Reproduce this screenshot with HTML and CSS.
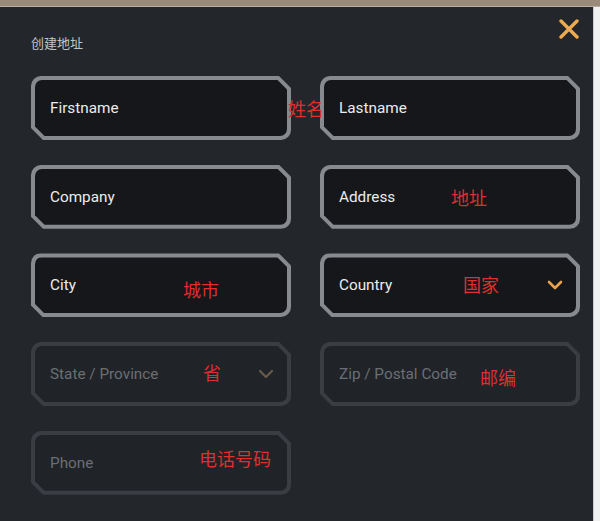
FILE: index.html
```html
<!DOCTYPE html>
<html lang="zh">
<head>
<meta charset="utf-8">
<title>创建地址</title>
<link rel="stylesheet" href="styles.css">
</head>
<body>
<div class="topbar"></div>
<div class="main">
  <div class="panel">
    <div class="header">
      <div class="title">创建地址</div>
      <svg class="close" width="20" height="20" viewBox="0 0 20 20">
        <path d="M2 2 L18 18 M18 2 L2 18" stroke="#eeaa4e" stroke-width="3.4" stroke-linecap="round" fill="none"/>
      </svg>
    </div>
    <div class="grid">
      <div class="field"><div class="inner">Firstname</div></div>
      <div class="field"><div class="inner">Lastname</div></div>
      <div class="field"><div class="inner">Company</div></div>
      <div class="field"><div class="inner">Address</div></div>
      <div class="field"><div class="inner">City</div></div>
      <div class="field"><div class="inner">Country
        <svg class="chev" width="16" height="10" viewBox="0 0 16 10"><path d="M2 2 L8 8 L14 2" stroke="#eba04a" stroke-width="2.6" fill="none" stroke-linecap="round" stroke-linejoin="round"/></svg>
      </div></div>
      <div class="field disabled"><div class="inner">State / Province
        <svg class="chev" width="16" height="10" viewBox="0 0 16 10"><path d="M2 2 L8 8 L14 2" stroke="#6a5a4c" stroke-width="2.2" fill="none" stroke-linecap="round" stroke-linejoin="round"/></svg>
      </div></div>
      <div class="field disabled"><div class="inner">Zip / Postal Code</div></div>
      <div class="field disabled"><div class="inner">Phone</div></div>
    </div>
    <span class="note n1">姓名</span>
    <span class="note n2">地址</span>
    <span class="note n3">城市</span>
    <span class="note n4">国家</span>
    <span class="note n5">省</span>
    <span class="note n6">邮编</span>
    <span class="note n7">电话号码</span>
  </div>
  <div class="scrollbar"></div>
</div>
</body>
</html>
```
FILE: styles.css
```css
* { box-sizing: border-box; }
html, body { margin: 0; padding: 0; }
body {
  width: 600px;
  height: 521px;
  overflow: hidden;
  background: #23272c;
  font-family: Roboto, "Noto Sans CJK SC", sans-serif;
}
.topbar {
  height: 7px;
  background: #9a8a7a;
  border-bottom: 1px solid #b8aea4;
}
.main {
  display: flex;
  height: 514px;
}
.panel {
  position: relative;
  width: 593px;
  background: #23272c;
}
.scrollbar {
  width: 7px;
  background: #f0f0f0;
  border-left: 1px solid #c9c9c9;
}
.header {
  height: 69px;
  display: flex;
  justify-content: space-between;
  align-items: flex-start;
  padding: 12px 14px 0 31px;
}
.title {
  margin-top: 16px;
  font-family: "Noto Sans CJK SC", sans-serif;
  font-size: 13px;
  line-height: 16px;
  color: #c2c6ca;
}
.grid {
  display: grid;
  grid-template-columns: 260px 260px;
  column-gap: 29px;
  row-gap: 24.7px;
  padding-left: 31px;
}
.field {
  height: 64px;
  padding: 4px;
  background: #878b8f;
  border-radius: 10px 2px 10px 2px;
  clip-path: polygon(0 0, calc(100% - 12px) 0, 100% 12px, 100% 100%, 12px 100%, 0 calc(100% - 12px));
}
.inner {
  height: 100%;
  display: flex;
  align-items: center;
  justify-content: space-between;
  padding: 0 13px 0 15px;
  background: #15171b;
  border-radius: 7px 0 7px 0;
  clip-path: polygon(0 0, calc(100% - 9.5px) 0, 100% 9.5px, 100% 100%, 9.5px 100%, 0 calc(100% - 9.5px));
  color: #ececec;
  font-size: 15.3px;
  font-weight: 400;
  letter-spacing: 0;
}
.field.disabled { background: #3a3e43; }
.field.disabled .inner { background: #202327; color: #6b6f74; }
.chev { display: block; }
.note {
  position: absolute;
  font-family: "Noto Sans CJK SC", sans-serif;
  font-size: 18px;
  line-height: 18px;
  color: #df2f2f;
}
.n1 { left: 288px; top: 92px; }
.n2 { left: 451px; top: 181px; }
.n3 { left: 183px; top: 273px; }
.n4 { left: 463px; top: 268px; }
.n5 { left: 203px; top: 356px; }
.n6 { left: 480px; top: 361px; }
.n7 { left: 199px; top: 442px; }
```
